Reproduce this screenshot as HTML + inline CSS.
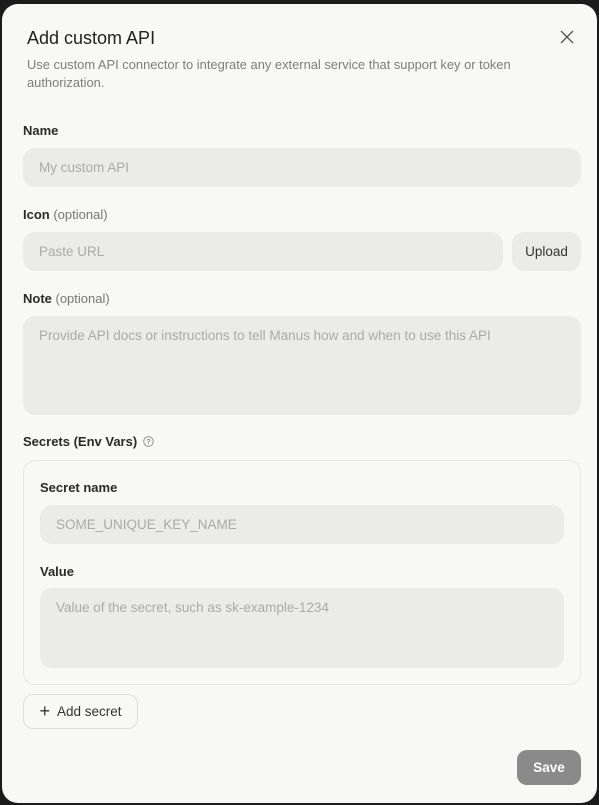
<!DOCTYPE html>
<html><head><style>
*{box-sizing:border-box;margin:0;padding:0}
body{width:599px;height:805px;background:#1c1c1c;font-family:"Liberation Sans",sans-serif;position:relative;overflow:hidden}
.m{position:absolute;left:2px;top:4px;width:595px;height:799px;background:#f8f8f7;border-radius:16px}
.a{position:absolute}
.t{left:27px;top:28px;font-size:18px;color:#222;font-weight:500}
.d{left:27px;top:56px;width:540px;font-size:12.9px;line-height:18px;color:#7d7d7d}
.l{font-size:13px;font-weight:bold;color:#2a2a2a}
.l span{font-weight:normal;color:#777}
.i{background:#ebebea;border-radius:12px;font-size:13.5px;color:#aaa;padding:0 16px;display:flex;align-items:center}
.ta{align-items:flex-start;padding-top:12px}
.btn{border-radius:10px;font-size:13.5px;color:#333;display:flex;align-items:center;justify-content:center}
</style></head><body>
<div class="m"></div>
<div class="a t">Add custom API</div>
<svg class="a" style="left:560px;top:30px" width="14" height="14" viewBox="0 0 14 14"><path d="M1 1L13 13M13 1L1 13" stroke="#555" stroke-width="1.3"/></svg>
<div class="a d">Use custom API connector to integrate any external service that support key or token authorization.</div>
<div class="a l" style="left:23px;top:123px">Name</div>
<div class="a i" style="left:23px;top:148px;width:558px;height:39px">My custom API</div>
<div class="a l" style="left:23px;top:207px">Icon <span>(optional)</span></div>
<div class="a i" style="left:23px;top:232px;width:480px;height:39px">Paste URL</div>
<div class="a btn" style="left:512px;top:232px;width:69px;height:39px;background:#ebebea;border-radius:12px">Upload</div>
<div class="a l" style="left:23px;top:291px">Note <span>(optional)</span></div>
<div class="a i ta" style="left:23px;top:316px;width:558px;height:99px">Provide API docs or instructions to tell Manus how and when to use this API</div>
<div class="a l" style="left:23px;top:434px">Secrets (Env Vars) <svg width="11" height="11" viewBox="0 0 11 11" style="vertical-align:-1px;margin-left:2px"><circle cx="5.5" cy="5.5" r="4.8" fill="none" stroke="#888" stroke-width="0.9"/><text x="5.5" y="8" font-size="7" text-anchor="middle" fill="#888" font-family="Liberation Sans">?</text></svg></div>
<div class="a" style="left:23px;top:460px;width:558px;height:225px;border:1px solid #e6e6e4;border-radius:12px"></div>
<div class="a l" style="left:40px;top:480px">Secret name</div>
<div class="a i" style="left:40px;top:505px;width:524px;height:39px">SOME_UNIQUE_KEY_NAME</div>
<div class="a l" style="left:40px;top:564px">Value</div>
<div class="a i ta" style="left:40px;top:588px;width:524px;height:80px">Value of the secret, such as sk-example-1234</div>
<div class="a btn" style="left:23px;top:694px;width:115px;height:35px;border:1px solid #ddd;border-radius:10px"><span style="font-size:18px;margin-right:7px;font-weight:300">+</span>Add secret</div>
<div class="a btn" style="left:517px;top:750px;width:64px;height:35px;background:#8a8a8a;color:#fff;font-weight:bold">Save</div>
</body></html>
